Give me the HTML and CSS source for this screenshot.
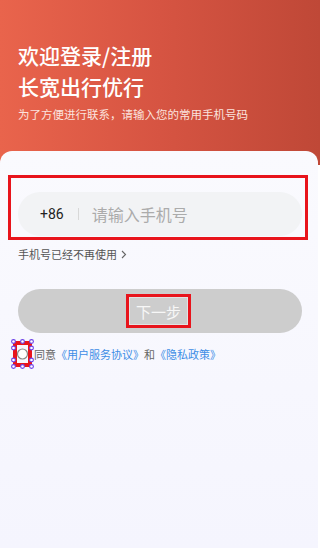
FILE: index.html
```html
<!DOCTYPE html>
<html lang="zh">
<head>
<meta charset="utf-8">
<link rel="stylesheet" href="styles.css">
</head>
<body>
<div class="page">
  <header class="header">
    <h1 class="title">欢迎登录/注册<br>长宽出行优行</h1>
    <p class="subtitle">为了方便进行联系，请输入您的常用手机号码</p>
  </header>
  <main class="card">
    <div class="mark-box">
      <div class="phone-pill">
        <span class="code">+86</span>
        <span class="divider"></span>
        <span class="placeholder">请输入手机号</span>
      </div>
    </div>
    <div class="nolonger">手机号已经不再使用<svg class="chev" width="6" height="9" viewBox="0 0 6 9"><path d="M1 1 L4.5 4.5 L1 8" fill="none" stroke="#666" stroke-width="1.1"/></svg></div>
    <div class="next-btn">
      <span class="mark-text"><span class="mark-inner">下一步</span></span>
    </div>
    <div class="agree">
      <svg class="check" width="23" height="30" viewBox="0 0 23 30">
        <rect x="2" y="2" width="19" height="26" fill="#e8141c"/>
        <rect x="6" y="6" width="11" height="18" fill="#f8f8fd"/>
        <circle cx="11.5" cy="15" r="5" fill="#fff" stroke="#8a8a8a" stroke-width="1.2"/>
        <g fill="#fff" stroke="#6a40e8" stroke-width="1.1">
          <circle cx="2.5" cy="2.5" r="1.9"/><circle cx="11.5" cy="2.5" r="1.9"/><circle cx="20.5" cy="2.5" r="1.9"/>
          <circle cx="2.5" cy="9" r="1.9"/><circle cx="20.5" cy="9" r="1.9"/>
          <circle cx="2.5" cy="21" r="1.9"/><circle cx="20.5" cy="21" r="1.9"/>
          <circle cx="2.5" cy="27.5" r="1.9"/><circle cx="11.5" cy="27.5" r="1.9"/><circle cx="20.5" cy="27.5" r="1.9"/>
        </g>
      </svg>
      <span class="gray">同意</span><span class="link">《用户服务协议》</span><span class="gray">和</span><span class="link">《隐私政策》</span>
    </div>
  </main>
</div>
</body>
</html>
```

FILE: styles.css
```css
* { box-sizing: border-box; }
html, body { margin: 0; padding: 0; }
body {
  background: #ffffff;
  font-family: "Noto Sans CJK SC", "Noto Sans", sans-serif;
  width: 320px;
  height: 550px;
  overflow: hidden;
}
.page { display: flex; flex-direction: column; height: 550px; }
.header {
  height: 165px;
  flex: none;
  background: linear-gradient(90deg, #e9644c 0%, #d65442 50%, #bf4837 100%);
  padding: 40px 18px 0;
  color: #fff;
}
.title {
  margin: 0;
  font-size: 21px;
  font-weight: 500;
  line-height: 31px;
  letter-spacing: 0;
}
.subtitle {
  margin: 3px 0 0;
  font-size: 11.5px;
  line-height: 18px;
  color: #fbe3de;
}
.card {
  flex: 1;
  margin: -14px 2px 2px 0;
  border-radius: 12px 12px 0 0;
  background: linear-gradient(180deg, #fafafe 0%, #f5f5fe 100%);
  padding-top: 24px;
  position: relative;
}
.mark-box {
  margin-left: 8px;
  width: 300px;
  height: 65px;
  border: 3px solid #e8141c;
  padding: 14px 3px 2px 7px;
}
.phone-pill {
  height: 44px;
  border-radius: 22px;
  background: #f2f3f5;
  display: flex;
  align-items: center;
  padding-left: 22px;
}
.code {
  font-family: "Roboto", "Noto Sans", sans-serif;
  font-size: 14px;
  color: #222;
}
.divider {
  width: 1px;
  height: 12px;
  background: #d8d8d8;
  margin: 0 13px 0 14px;
}
.placeholder {
  font-size: 16px;
  color: #ababab;
}
.nolonger {
  margin: 5px 0 0 18px;
  font-size: 11px;
  color: #555;
  line-height: 18px;
  display: flex;
  align-items: center;
  gap: 4px;
}
.chev { flex: none; }
.next-btn {
  margin: 26px 0 0 18px;
  width: 284px;
  height: 44px;
  border-radius: 22px;
  background: #cdcdcd;
  display: flex;
  align-items: center;
  justify-content: center;
  padding-right: 3px;
}
.mark-text {
  border: 3px solid #e8141c;
  height: 34px;
  width: 65px;
  display: flex;
}
.mark-inner {
  flex: 1;
  border: 1px solid #e2e2e2;
  color: #f7f7f7;
  font-size: 15px;
  display: flex;
  align-items: center;
  justify-content: center;
}
.agree {
  margin: 6px 0 0 11px;
  display: flex;
  align-items: center;
  font-size: 11px;
  line-height: 16px;
}
.check { flex: none; margin-right: 0; }
.gray { color: #666; }
.link { color: #3d8de6; }
```
